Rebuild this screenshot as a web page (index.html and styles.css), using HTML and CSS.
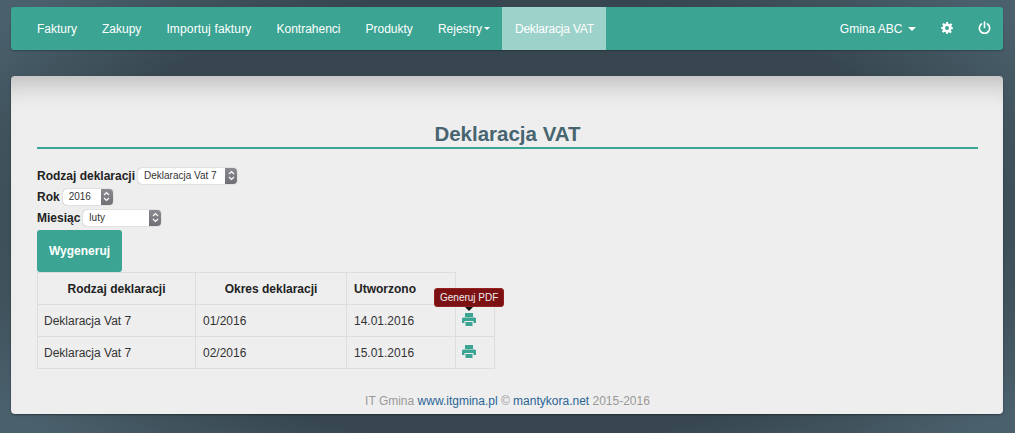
FILE: index.html
```html
<!DOCTYPE html>
<html lang="pl">
<head>
    <meta charset="utf-8">
    <title>Deklaracja VAT</title>
    <link rel="stylesheet" href="styles.css">
</head>
<body>
    <nav class="navbar">
        <ul class="nav-list">
            <li><a href="#">Faktury</a></li>
            <li><a href="#">Zakupy</a></li>
            <li class="wide"><a href="#">Importuj faktury</a></li>
            <li><a href="#">Kontrahenci</a></li>
            <li><a href="#">Produkty</a></li>
            <li><a href="#">Rejestry<span class="caret caret-tight"></span></a></li>
            <li class="active"><a href="#">Deklaracja VAT</a></li>
        </ul>
        <ul class="nav-list">
            <li><a href="#">Gmina ABC<span class="caret caret-user"></span></a></li>
            <li>
                <a href="#" aria-label="Ustawienia">
                    <svg class="nav-icon" width="12" height="12" viewBox="0 0 24 24"><path fill="#fff" fill-rule="evenodd" d="M10 0h4l.7 3.400 2.200.9L19.800 2.400l2.800 2.800-1.900 2.900.9 2.200L24 11v3l-3.400.7-.9 2.200 1.900 2.900-2.800 2.800-2.900-1.900-2.200.9L13.500 24h-3l-.7-3.400-2.200-.9-2.900 1.900-2.800-2.800 1.900-2.900-.9-2.200L0 13.500v-3l3.400-.7.9-2.200L2.400 4.700l2.800-2.800 2.900 1.900 2.200-.9zM12 8a4 4 0 1 0 0 8 4 4 0 0 0 0-8z"/></svg>
                </a>
            </li>
            <li>
                <a href="#" aria-label="Wyloguj">
                    <svg class="nav-icon" width="13" height="13" viewBox="0 0 24 24"><path fill="none" stroke="#fff" stroke-width="3" stroke-linecap="round" d="M12 2v10M6.500 5.500a9.500 9.500 0 1 0 11 0"/></svg>
                </a>
            </li>
        </ul>
    </nav>

    <main class="panel">
        <h1 class="title">Deklaracja VAT</h1>
        <div class="form-row">
            <label>Rodzaj deklaracji</label>
            <div class="select select-type"><span>Deklaracja Vat 7</span><i class="stepper"><svg width="7" height="11" viewBox="0 0 7 11"><path fill="none" stroke="#fff" stroke-width="1.200" d="M1 4l2.500-2.500L6 4M1 7l2.500 2.500L6 7"/></svg></i></div>
        </div>
        <div class="form-row">
            <label>Rok</label>
            <div class="select select-year"><span>2016</span><i class="stepper"><svg width="7" height="11" viewBox="0 0 7 11"><path fill="none" stroke="#fff" stroke-width="1.200" d="M1 4l2.500-2.500L6 4M1 7l2.500 2.500L6 7"/></svg></i></div>
        </div>
        <div class="form-row">
            <label>Miesiąc</label>
            <div class="select select-month"><span>luty</span><i class="stepper"><svg width="7" height="11" viewBox="0 0 7 11"><path fill="none" stroke="#fff" stroke-width="1.200" d="M1 4l2.500-2.500L6 4M1 7l2.500 2.500L6 7"/></svg></i></div>
        </div>
        <button class="btn" type="button">Wygeneruj</button>

        <table class="list">
            <tr>
                <th class="col-type">Rodzaj deklaracji</th>
                <th class="col-period">Okres deklaracji</th>
                <th class="col-date">Utworzono</th>
            </tr>
            <tr>
                <td>Deklaracja Vat 7</td>
                <td>01/2016</td>
                <td>14.01.2016</td>
                <td class="col-action">
                    <span class="tooltip">Generuj PDF</span>
                    <svg class="printer" width="14" height="13" viewBox="0 0 14 13"><path fill="#3ba493" d="M3 0h8v4H3zM1.500 4.500h11c.8 0 1.500.7 1.500 1.500v4h-2.500V8h-9v2H0V6c0-.8.7-1.500 1.500-1.500zM3.500 9h7v4h-7z"/></svg>
                </td>
            </tr>
            <tr>
                <td>Deklaracja Vat 7</td>
                <td>02/2016</td>
                <td>15.01.2016</td>
                <td class="col-action">
                    <svg class="printer" width="14" height="13" viewBox="0 0 14 13"><path fill="#3ba493" d="M3 0h8v4H3zM1.500 4.500h11c.8 0 1.500.7 1.500 1.500v4h-2.500V8h-9v2H0V6c0-.8.7-1.500 1.500-1.500zM3.500 9h7v4h-7z"/></svg>
                </td>
            </tr>
        </table>

        <footer class="footer">IT Gmina <a href="#">www.itgmina.pl</a> © <a href="#">mantykora.net</a> 2015-2016</footer>
    </main>
</body>
</html>
```

FILE: styles.css
```css
*{box-sizing: border-box;}
html,body{height: 100%;}
body{margin: 0;padding: 7px 12px 0 11px;overflow: hidden;font-family: "Liberation Sans", Arial, sans-serif;font-size: 12px;color: #333;background: radial-gradient(ellipse 62% 75% at 50% 50%, #38474f 70%, #4a616d 100%);}
a{text-decoration: none;}

.navbar{display: flex;justify-content: space-between;height: 43px;padding-left: 13.500px;background: #3ba493;border-radius: 3px;box-shadow: 0 1px 2px rgba(0,0,0,.25);}
.nav-list{display: flex;margin: 0;padding: 0;list-style: none;}
.nav-list a{display: flex;align-items: center;height: 43px;padding: 0 12.500px;color: #fff;}
.nav-list .wide a{letter-spacing: .15px;}
.nav-list .active a{background: #9cd2c9;letter-spacing: -.18px;}
.nav-icon{margin-bottom: 2px;}
.caret{display: inline-block;width: 0;height: 0;margin-left: 6px;border-top: 4px solid #fff;border-left: 4px solid transparent;border-right: 4px solid transparent;}
.caret-tight{margin-left: 2px;border-top-width: 3px;border-left-width: 3px;border-right-width: 3px;}
.caret-user{margin-left: 5px;}

.panel{position: relative;height: 338px;margin-top: 26px;padding: 46px 25px 0 26px;background: #eee;border-radius: 4px;box-shadow: inset 0 28px 26px -20px rgba(0,0,0,.22), 0 1px 2px rgba(0,0,0,.4);}
.title{margin: 0 0 16px;height: 27px;font-size: 20.500px;line-height: 24px;font-weight: bold;text-align: center;color: #476570;border-bottom: 2px solid #3ba493;}

.form-row{display: flex;align-items: center;gap: 3px;height: 21px;}
.form-row label{font-weight: bold;color: #222;}
.select{display: flex;align-items: center;justify-content: space-between;height: 16px;padding-left: 6px;background: #fff;border-radius: 4px;box-shadow: 0 0 1px rgba(0,0,0,.5);font-size: 10px;color: #333;overflow: hidden;}
.select-type{width: 99px;}
.select-year{width: 50px;}
.select-month{width: 78px;}
.stepper{display: flex;align-items: center;justify-content: center;width: 12px;height: 16px;background: linear-gradient(#8a8a90, #6f6f76);}

.btn{display: block;width: 85px;height: 42px;margin-top: 2px;padding: 0;border: 0;border-radius: 3px;background: #3ba493;color: #fff;font: bold 12px "Liberation Sans", Arial, sans-serif;}

.list{border-collapse: collapse;color: #333;}
.list th,.list td{height: 32px;padding: 0 7px;border: 1px solid #ddd;text-align: left;}
.list td:first-child{padding-left: 6px;}
.list th{text-align: center;color: #222;}
.list th.col-date{text-align: left;}
.col-type{width: 158px;}
.col-period{width: 151px;}
.col-date{width: 109px;}
.list .col-action{position: relative;width: 39px;padding-left: 6px;}
.printer{display: block;margin-top: -2px;}
.tooltip{position: absolute;left: -22px;top: -17px;padding: 3px 5px;background: #7b1113;border: 1px solid #94201f;color: #eee;font-size: 10px;line-height: 11px;white-space: nowrap;border-radius: 3px;}
.tooltip::after{content: "";position: absolute;left: 50%;bottom: -5px;margin-left: -4px;border-top: 4px solid #111;border-left: 4px solid transparent;border-right: 4px solid transparent;}

.footer{margin-top: 25px;text-align: center;color: #999;}
.footer a{color: #2a6496;}
```
